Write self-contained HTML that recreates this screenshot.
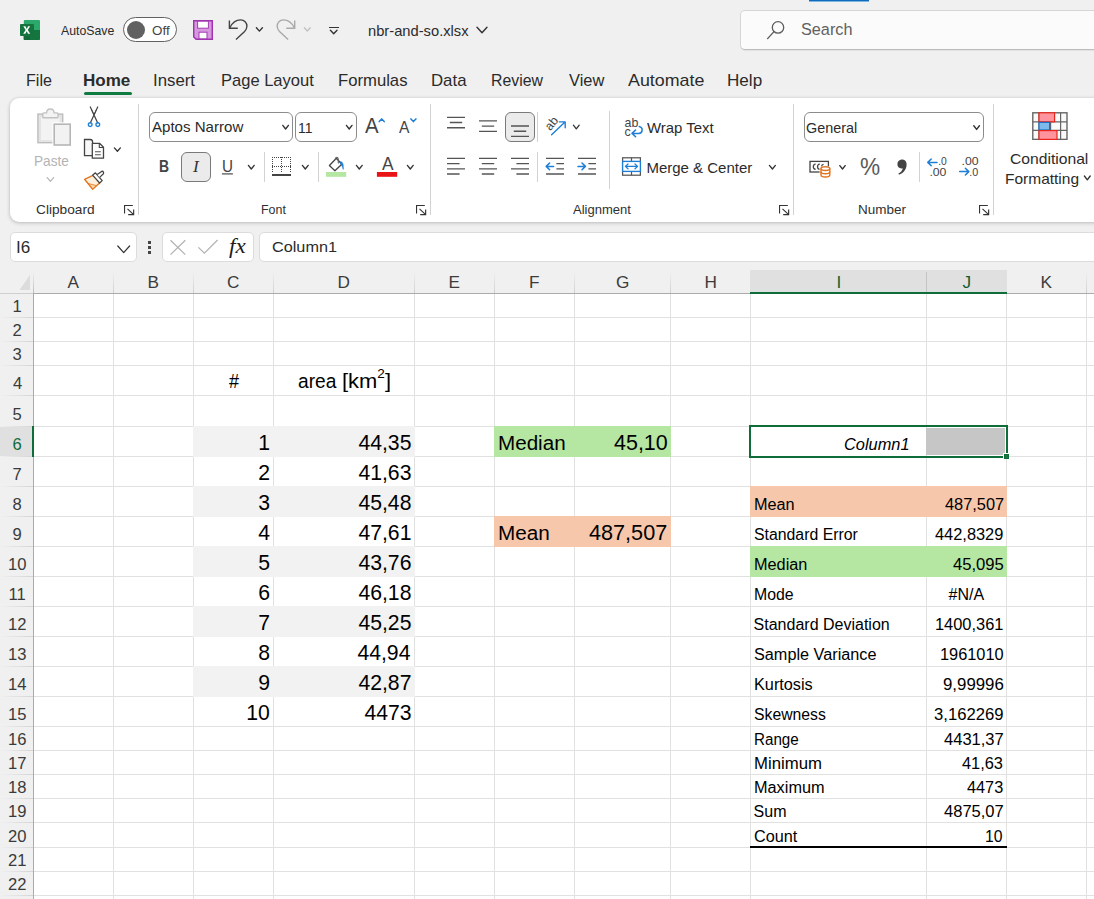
<!DOCTYPE html>
<html lang="en"><head><meta charset="utf-8"><title>nbr-and-so.xlsx - Excel</title>
<style>
html,body{margin:0;padding:0}
body{width:1094px;height:899px;overflow:hidden;position:relative;background:#f0f0f0;font-family:"Liberation Sans",sans-serif}
.a{position:absolute;box-sizing:border-box;display:block}
.t{position:absolute;white-space:pre;line-height:1;transform-origin:0 0}
</style></head>
<body>
<div class="a" style="left:34px;top:294px;width:1060px;height:605px;background:#ffffff;"></div>
<div class="a" style="left:34px;top:317px;width:1060px;height:1px;background:#e1e1e1;"></div>
<div class="a" style="left:34px;top:341px;width:1060px;height:1px;background:#e1e1e1;"></div>
<div class="a" style="left:34px;top:365px;width:1060px;height:1px;background:#e1e1e1;"></div>
<div class="a" style="left:34px;top:395px;width:1060px;height:1px;background:#e1e1e1;"></div>
<div class="a" style="left:34px;top:426px;width:1060px;height:1px;background:#e1e1e1;"></div>
<div class="a" style="left:34px;top:456px;width:1060px;height:1px;background:#e1e1e1;"></div>
<div class="a" style="left:34px;top:486px;width:1060px;height:1px;background:#e1e1e1;"></div>
<div class="a" style="left:34px;top:516px;width:1060px;height:1px;background:#e1e1e1;"></div>
<div class="a" style="left:34px;top:546px;width:1060px;height:1px;background:#e1e1e1;"></div>
<div class="a" style="left:34px;top:576px;width:1060px;height:1px;background:#e1e1e1;"></div>
<div class="a" style="left:34px;top:606px;width:1060px;height:1px;background:#e1e1e1;"></div>
<div class="a" style="left:34px;top:636px;width:1060px;height:1px;background:#e1e1e1;"></div>
<div class="a" style="left:34px;top:666px;width:1060px;height:1px;background:#e1e1e1;"></div>
<div class="a" style="left:34px;top:696px;width:1060px;height:1px;background:#e1e1e1;"></div>
<div class="a" style="left:34px;top:726px;width:1060px;height:1px;background:#e1e1e1;"></div>
<div class="a" style="left:34px;top:750px;width:1060px;height:1px;background:#e1e1e1;"></div>
<div class="a" style="left:34px;top:774px;width:1060px;height:1px;background:#e1e1e1;"></div>
<div class="a" style="left:34px;top:798px;width:1060px;height:1px;background:#e1e1e1;"></div>
<div class="a" style="left:34px;top:822px;width:1060px;height:1px;background:#e1e1e1;"></div>
<div class="a" style="left:34px;top:847px;width:1060px;height:1px;background:#e1e1e1;"></div>
<div class="a" style="left:34px;top:871px;width:1060px;height:1px;background:#e1e1e1;"></div>
<div class="a" style="left:34px;top:895px;width:1060px;height:1px;background:#e1e1e1;"></div>
<div class="a" style="left:113px;top:294px;width:1px;height:605px;background:#e1e1e1;"></div>
<div class="a" style="left:193px;top:294px;width:1px;height:605px;background:#e1e1e1;"></div>
<div class="a" style="left:273px;top:294px;width:1px;height:605px;background:#e1e1e1;"></div>
<div class="a" style="left:414px;top:294px;width:1px;height:605px;background:#e1e1e1;"></div>
<div class="a" style="left:494px;top:294px;width:1px;height:605px;background:#e1e1e1;"></div>
<div class="a" style="left:574px;top:294px;width:1px;height:605px;background:#e1e1e1;"></div>
<div class="a" style="left:670px;top:294px;width:1px;height:605px;background:#e1e1e1;"></div>
<div class="a" style="left:750px;top:294px;width:1px;height:605px;background:#e1e1e1;"></div>
<div class="a" style="left:926px;top:294px;width:1px;height:605px;background:#e1e1e1;"></div>
<div class="a" style="left:1006px;top:294px;width:1px;height:605px;background:#e1e1e1;"></div>
<div class="a" style="left:1086px;top:294px;width:1px;height:605px;background:#e1e1e1;"></div>
<div class="a" style="left:193px;top:426px;width:222px;height:31px;background:#f2f2f2;"></div>
<div class="a" style="left:193px;top:486px;width:222px;height:31px;background:#f2f2f2;"></div>
<div class="a" style="left:193px;top:546px;width:222px;height:31px;background:#f2f2f2;"></div>
<div class="a" style="left:193px;top:606px;width:222px;height:31px;background:#f2f2f2;"></div>
<div class="a" style="left:193px;top:666px;width:222px;height:31px;background:#f2f2f2;"></div>
<div class="a" style="left:494px;top:426px;width:177px;height:31px;background:#b5e6a2;"></div>
<div class="a" style="left:494px;top:516px;width:177px;height:31px;background:#f7c7ac;"></div>
<div class="a" style="left:750px;top:486px;width:257px;height:31px;background:#f7c7ac;"></div>
<div class="a" style="left:750px;top:546px;width:257px;height:31px;background:#b5e6a2;"></div>
<div class="a" style="left:0px;top:270px;width:1094px;height:23px;background:#f0f0f0;"></div>
<div class="a" style="left:0px;top:294px;width:33px;height:605px;background:#f0f0f0;"></div>
<div class="a" style="left:0px;top:293px;width:33px;height:1px;background:#cfcfcf;"></div>
<div class="a" style="left:33px;top:293px;width:1061px;height:1px;background:#ababab;"></div>
<div class="a" style="left:33px;top:294px;width:1px;height:605px;background:#ababab;"></div>
<div class="a" style="left:33px;top:272px;width:1px;height:21px;background:linear-gradient(#f0f0f0,#bdbdbd);"></div>
<div class="a" style="left:113px;top:272px;width:1px;height:21px;background:linear-gradient(#f0f0f0,#cfcfcf);"></div>
<div class="a" style="left:193px;top:272px;width:1px;height:21px;background:linear-gradient(#f0f0f0,#cfcfcf);"></div>
<div class="a" style="left:273px;top:272px;width:1px;height:21px;background:linear-gradient(#f0f0f0,#cfcfcf);"></div>
<div class="a" style="left:414px;top:272px;width:1px;height:21px;background:linear-gradient(#f0f0f0,#cfcfcf);"></div>
<div class="a" style="left:494px;top:272px;width:1px;height:21px;background:linear-gradient(#f0f0f0,#cfcfcf);"></div>
<div class="a" style="left:574px;top:272px;width:1px;height:21px;background:linear-gradient(#f0f0f0,#cfcfcf);"></div>
<div class="a" style="left:670px;top:272px;width:1px;height:21px;background:linear-gradient(#f0f0f0,#cfcfcf);"></div>
<div class="a" style="left:750px;top:272px;width:1px;height:21px;background:linear-gradient(#f0f0f0,#cfcfcf);"></div>
<div class="a" style="left:926px;top:272px;width:1px;height:21px;background:linear-gradient(#f0f0f0,#cfcfcf);"></div>
<div class="a" style="left:1006px;top:272px;width:1px;height:21px;background:linear-gradient(#f0f0f0,#cfcfcf);"></div>
<div class="a" style="left:1086px;top:272px;width:1px;height:21px;background:linear-gradient(#f0f0f0,#cfcfcf);"></div>
<div class="a" style="left:0px;top:317px;width:33px;height:1px;background:linear-gradient(90deg,#f0f0f0,#d4d4d4);"></div>
<div class="a" style="left:0px;top:341px;width:33px;height:1px;background:linear-gradient(90deg,#f0f0f0,#d4d4d4);"></div>
<div class="a" style="left:0px;top:365px;width:33px;height:1px;background:linear-gradient(90deg,#f0f0f0,#d4d4d4);"></div>
<div class="a" style="left:0px;top:395px;width:33px;height:1px;background:linear-gradient(90deg,#f0f0f0,#d4d4d4);"></div>
<div class="a" style="left:0px;top:426px;width:33px;height:1px;background:linear-gradient(90deg,#f0f0f0,#d4d4d4);"></div>
<div class="a" style="left:0px;top:456px;width:33px;height:1px;background:linear-gradient(90deg,#f0f0f0,#d4d4d4);"></div>
<div class="a" style="left:0px;top:486px;width:33px;height:1px;background:linear-gradient(90deg,#f0f0f0,#d4d4d4);"></div>
<div class="a" style="left:0px;top:516px;width:33px;height:1px;background:linear-gradient(90deg,#f0f0f0,#d4d4d4);"></div>
<div class="a" style="left:0px;top:546px;width:33px;height:1px;background:linear-gradient(90deg,#f0f0f0,#d4d4d4);"></div>
<div class="a" style="left:0px;top:576px;width:33px;height:1px;background:linear-gradient(90deg,#f0f0f0,#d4d4d4);"></div>
<div class="a" style="left:0px;top:606px;width:33px;height:1px;background:linear-gradient(90deg,#f0f0f0,#d4d4d4);"></div>
<div class="a" style="left:0px;top:636px;width:33px;height:1px;background:linear-gradient(90deg,#f0f0f0,#d4d4d4);"></div>
<div class="a" style="left:0px;top:666px;width:33px;height:1px;background:linear-gradient(90deg,#f0f0f0,#d4d4d4);"></div>
<div class="a" style="left:0px;top:696px;width:33px;height:1px;background:linear-gradient(90deg,#f0f0f0,#d4d4d4);"></div>
<div class="a" style="left:0px;top:726px;width:33px;height:1px;background:linear-gradient(90deg,#f0f0f0,#d4d4d4);"></div>
<div class="a" style="left:0px;top:750px;width:33px;height:1px;background:linear-gradient(90deg,#f0f0f0,#d4d4d4);"></div>
<div class="a" style="left:0px;top:774px;width:33px;height:1px;background:linear-gradient(90deg,#f0f0f0,#d4d4d4);"></div>
<div class="a" style="left:0px;top:798px;width:33px;height:1px;background:linear-gradient(90deg,#f0f0f0,#d4d4d4);"></div>
<div class="a" style="left:0px;top:822px;width:33px;height:1px;background:linear-gradient(90deg,#f0f0f0,#d4d4d4);"></div>
<div class="a" style="left:0px;top:847px;width:33px;height:1px;background:linear-gradient(90deg,#f0f0f0,#d4d4d4);"></div>
<div class="a" style="left:0px;top:871px;width:33px;height:1px;background:linear-gradient(90deg,#f0f0f0,#d4d4d4);"></div>
<div class="a" style="left:0px;top:895px;width:33px;height:1px;background:linear-gradient(90deg,#f0f0f0,#d4d4d4);"></div>
<svg class="a" style="left:18px;top:272px" width="14" height="20" viewBox="0 0 14 20"><path d="M12 3 L12 18 L1.5 18 Z" fill="#dcdcdc"/></svg>
<div class="a" style="left:750px;top:270px;width:257px;height:22px;background:#e0e0e0;"></div>
<div class="a" style="left:926px;top:272px;width:1px;height:20px;background:#c4c4c4;"></div>
<div class="a" style="left:750px;top:292px;width:257px;height:2px;background:#0e6d38;"></div>
<div class="a" style="left:0px;top:427px;width:32px;height:29px;background:#e0e0e0;"></div>
<div class="a" style="left:32px;top:426px;width:2px;height:31px;background:#0e6d38;"></div>
<span class="t" style='left:67.50px;top:274px;font-size:17.2px;color:#3b3b3b;'>A</span>
<span class="t" style='left:147.50px;top:274px;font-size:17.2px;color:#3b3b3b;'>B</span>
<span class="t" style='left:227.00px;top:274px;font-size:17.2px;color:#3b3b3b;'>C</span>
<span class="t" style='left:337.50px;top:274px;font-size:17.2px;color:#3b3b3b;'>D</span>
<span class="t" style='left:448.50px;top:274px;font-size:17.2px;color:#3b3b3b;'>E</span>
<span class="t" style='left:529.00px;top:274px;font-size:17.2px;color:#3b3b3b;'>F</span>
<span class="t" style='left:616.00px;top:274px;font-size:17.2px;color:#3b3b3b;'>G</span>
<span class="t" style='left:704.50px;top:274px;font-size:17.2px;color:#3b3b3b;'>H</span>
<span class="t" style='left:836.50px;top:274px;font-size:17.2px;color:#0f5c32;'>I</span>
<span class="t" style='left:962.50px;top:274px;font-size:17.2px;color:#0f5c32;'>J</span>
<span class="t" style='left:1040.50px;top:274px;font-size:17.2px;color:#3b3b3b;'>K</span>
<span class="t" style='left:12.60px;top:299px;font-size:16.6px;color:#3b3b3b;'>1</span>
<span class="t" style='left:12.60px;top:323px;font-size:16.6px;color:#3b3b3b;'>2</span>
<span class="t" style='left:12.60px;top:347px;font-size:16.6px;color:#3b3b3b;'>3</span>
<span class="t" style='left:13.10px;top:376px;font-size:16.6px;color:#3b3b3b;'>4</span>
<span class="t" style='left:12.60px;top:407px;font-size:16.6px;color:#3b3b3b;'>5</span>
<span class="t" style='left:12.60px;top:437px;font-size:16.6px;color:#0f6b38;'>6</span>
<span class="t" style='left:12.60px;top:467px;font-size:16.6px;color:#3b3b3b;'>7</span>
<span class="t" style='left:12.60px;top:497px;font-size:16.6px;color:#3b3b3b;'>8</span>
<span class="t" style='left:12.60px;top:527px;font-size:16.6px;color:#3b3b3b;'>9</span>
<span class="t" style='left:8.10px;top:557px;font-size:16.6px;color:#3b3b3b;'>10</span>
<span class="t" style='left:8.60px;top:587px;font-size:16.6px;color:#3b3b3b;'>11</span>
<span class="t" style='left:8.10px;top:617px;font-size:16.6px;color:#3b3b3b;'>12</span>
<span class="t" style='left:8.10px;top:647px;font-size:16.6px;color:#3b3b3b;'>13</span>
<span class="t" style='left:8.10px;top:677px;font-size:16.6px;color:#3b3b3b;'>14</span>
<span class="t" style='left:8.10px;top:707px;font-size:16.6px;color:#3b3b3b;'>15</span>
<span class="t" style='left:8.10px;top:732px;font-size:16.6px;color:#3b3b3b;'>16</span>
<span class="t" style='left:8.10px;top:756px;font-size:16.6px;color:#3b3b3b;'>17</span>
<span class="t" style='left:8.10px;top:780px;font-size:16.6px;color:#3b3b3b;'>18</span>
<span class="t" style='left:8.10px;top:804px;font-size:16.6px;color:#3b3b3b;'>19</span>
<span class="t" style='left:8.10px;top:829px;font-size:16.6px;color:#3b3b3b;'>20</span>
<span class="t" style='left:8.10px;top:853px;font-size:16.6px;color:#3b3b3b;'>21</span>
<span class="t" style='left:8.10px;top:877px;font-size:16.6px;color:#3b3b3b;'>22</span>
<span class="t" style='left:228.90px;top:371px;font-size:20px;color:#000000;transform:scaleX(0.9000);'>#</span>
<span class="t" style='left:297.76px;top:371px;font-size:20.5px;color:#000000;transform:scaleX(0.9350);'>area</span>
<span class="t" style='left:342.23px;top:371px;font-size:20.5px;color:#000000;transform:scaleX(1.0698);'>[km<span style="font-size:62%;position:relative;top:-0.78em">2</span>]</span>
<span class="t" style='left:258.30px;top:432px;font-size:21.2px;color:#000000;'>1</span>
<span class="t" style='left:358.40px;top:432px;font-size:21.2px;color:#000000;'>44,35</span>
<span class="t" style='left:258.30px;top:462px;font-size:21.2px;color:#000000;'>2</span>
<span class="t" style='left:358.40px;top:462px;font-size:21.2px;color:#000000;'>41,63</span>
<span class="t" style='left:258.30px;top:492px;font-size:21.2px;color:#000000;'>3</span>
<span class="t" style='left:358.40px;top:492px;font-size:21.2px;color:#000000;'>45,48</span>
<span class="t" style='left:258.30px;top:522px;font-size:21.2px;color:#000000;'>4</span>
<span class="t" style='left:358.40px;top:522px;font-size:21.2px;color:#000000;'>47,61</span>
<span class="t" style='left:258.30px;top:552px;font-size:21.2px;color:#000000;'>5</span>
<span class="t" style='left:358.40px;top:552px;font-size:21.2px;color:#000000;'>43,76</span>
<span class="t" style='left:258.30px;top:582px;font-size:21.2px;color:#000000;'>6</span>
<span class="t" style='left:358.40px;top:582px;font-size:21.2px;color:#000000;'>46,18</span>
<span class="t" style='left:258.30px;top:612px;font-size:21.2px;color:#000000;'>7</span>
<span class="t" style='left:358.40px;top:612px;font-size:21.2px;color:#000000;'>45,25</span>
<span class="t" style='left:258.30px;top:642px;font-size:21.2px;color:#000000;'>8</span>
<span class="t" style='left:357.40px;top:642px;font-size:21.2px;color:#000000;'>44,94</span>
<span class="t" style='left:258.30px;top:672px;font-size:21.2px;color:#000000;'>9</span>
<span class="t" style='left:358.40px;top:672px;font-size:21.2px;color:#000000;'>42,87</span>
<span class="t" style='left:246.30px;top:702px;font-size:21.2px;color:#000000;'>10</span>
<span class="t" style='left:364.40px;top:702px;font-size:21.2px;color:#000000;'>4473</span>
<span class="t" style='left:498.07px;top:433px;font-size:20px;color:#000000;transform:scaleX(1.0312);'>Median</span>
<span class="t" style='left:613.50px;top:432px;font-size:21.2px;color:#000000;transform:scaleX(1.0135);'>45,10</span>
<span class="t" style='left:497.56px;top:523px;font-size:20px;color:#000000;transform:scaleX(1.0354);'>Mean</span>
<span class="t" style='left:589.40px;top:522px;font-size:21.2px;color:#000000;transform:scaleX(1.0211);'>487,507</span>
<span class="t" style='left:844.39px;top:436px;font-size:16.2px;color:#000000;font-style:italic;transform:scaleX(1.0111);'>Column1</span>
<span class="t" style='left:753.58px;top:497px;font-size:16px;color:#000000;transform:scaleX(1.0158);'>Mean</span>
<span class="t" style='left:944.60px;top:497px;font-size:16px;color:#000000;transform:scaleX(1.0228);'>487,507</span>
<span class="t" style='left:753.61px;top:527px;font-size:16px;color:#000000;transform:scaleX(0.9894);'>Standard Error</span>
<span class="t" style='left:935.30px;top:527px;font-size:16px;color:#000000;transform:scaleX(1.0242);'>442,8329</span>
<span class="t" style='left:753.58px;top:557px;font-size:16px;color:#000000;transform:scaleX(1.0176);'>Median</span>
<span class="t" style='left:953.00px;top:557px;font-size:16px;color:#000000;transform:scaleX(1.0396);'>45,095</span>
<span class="t" style='left:753.61px;top:587px;font-size:16px;color:#000000;transform:scaleX(0.9897);'>Mode</span>
<span class="t" style='left:948.60px;top:587px;font-size:16px;color:#000000;'>#N/A</span>
<span class="t" style='left:753.60px;top:617px;font-size:16px;color:#000000;'>Standard Deviation</span>
<span class="t" style='left:935.28px;top:617px;font-size:16px;color:#000000;transform:scaleX(1.0246);'>1400,361</span>
<span class="t" style='left:753.58px;top:647px;font-size:16px;color:#000000;transform:scaleX(1.0151);'>Sample Variance</span>
<span class="t" style='left:939.58px;top:647px;font-size:16px;color:#000000;transform:scaleX(1.0213);'>1961010</span>
<span class="t" style='left:753.58px;top:677px;font-size:16px;color:#000000;transform:scaleX(1.0161);'>Kurtosis</span>
<span class="t" style='left:942.95px;top:677px;font-size:16px;color:#000000;transform:scaleX(1.0518);'>9,99996</span>
<span class="t" style='left:753.62px;top:707px;font-size:16px;color:#000000;transform:scaleX(0.9847);'>Skewness</span>
<span class="t" style='left:934.26px;top:707px;font-size:16px;color:#000000;transform:scaleX(1.0400);'>3,162269</span>
<span class="t" style='left:753.65px;top:732px;font-size:16px;color:#000000;transform:scaleX(0.9478);'>Range</span>
<span class="t" style='left:944.00px;top:732px;font-size:16px;color:#000000;transform:scaleX(1.0333);'>4431,37</span>
<span class="t" style='left:753.55px;top:756px;font-size:16px;color:#000000;transform:scaleX(1.0460);'>Minimum</span>
<span class="t" style='left:962.00px;top:756px;font-size:16px;color:#000000;transform:scaleX(1.0225);'>41,63</span>
<span class="t" style='left:753.58px;top:780px;font-size:16px;color:#000000;transform:scaleX(1.0176);'>Maximum</span>
<span class="t" style='left:967.30px;top:780px;font-size:16px;color:#000000;transform:scaleX(1.0171);'>4473</span>
<span class="t" style='left:753.60px;top:804px;font-size:16px;color:#000000;'>Sum</span>
<span class="t" style='left:944.00px;top:804px;font-size:16px;color:#000000;transform:scaleX(1.0333);'>4875,07</span>
<span class="t" style='left:753.59px;top:829px;font-size:16px;color:#000000;transform:scaleX(1.0143);'>Count</span>
<span class="t" style='left:985.22px;top:829px;font-size:16px;color:#000000;transform:scaleX(0.9824);'>10</span>
<div class="a" style="left:750px;top:846px;width:257px;height:2px;background:#000000;"></div>
<div class="a" style="left:926px;top:428px;width:79px;height:27px;background:#c6c6c6;"></div>
<div class="a" style="left:749px;top:425px;width:259px;height:33px;border:2px solid #0e6d38;"></div>
<div class="a" style="left:1003px;top:453px;width:6px;height:6px;background:#ffffff;"></div>
<div class="a" style="left:1004px;top:454px;width:5px;height:5px;background:#1a7541;border:1px solid #0e6d38;"></div>
<div class="a" style="left:809px;top:0px;width:60px;height:1px;background:#0f6cbd;"></div>
<div class="a" style="left:809px;top:1px;width:60px;height:1px;background:#7db4e0;"></div>
<svg class="a" style="left:20px;top:20px" width="20" height="20" viewBox="0 0 20 20">
<rect x="3.8" y="0" width="16.2" height="20" rx="1" fill="#2ba96c"/>
<path d="M3.8 10 H20 V19 Q20 20 19 20 H4.8 Q3.8 20 3.8 19 Z" fill="#15753f"/>
<rect x="3.8" y="10" width="6" height="10" fill="#136a38"/>
<rect x="0" y="4" width="14" height="12" rx="0.9" fill="#15733d"/>
<path d="M3.3 6.3 L5.4 6.3 L6.7 8.9 L8.1 6.3 L10.1 6.3 L7.75 10 L10.2 13.8 L8.1 13.8 L6.7 11.2 L5.3 13.8 L3.2 13.8 L5.65 10 Z" fill="#fff"/>
</svg>
<span class="t" style='left:61.40px;top:24px;font-size:13px;color:#2b2b2b;transform:scaleX(0.9464);'>AutoSave</span>
<div class="a" style="left:123px;top:17px;width:54px;height:25px;background:#ffffff;border:1px solid #616161;border-radius:13px;"></div>
<div class="a" style="left:127px;top:21px;width:18px;height:18px;background:#616161;border-radius:50%;"></div>
<span class="t" style='left:151.50px;top:24px;font-size:13px;color:#444;transform:scaleX(1.0294);'>Off</span>
<svg class="a" style="left:193px;top:20px" width="20" height="20" viewBox="0 0 20 20">
<path d="M0.7 0.7 H19.3 V19.3 H3.2 L0.7 16.8 Z" fill="#d898e0" stroke="#a033ae" stroke-width="1.5"/>
<rect x="4.6" y="1.2" width="10.8" height="7" fill="#ffffff" stroke="#a33bb2" stroke-width="1"/>
<rect x="6" y="12.2" width="8" height="6.6" fill="#ffffff" stroke="#a33bb2" stroke-width="1"/>
</svg>
<svg class="a" style="left:226px;top:17px" width="24" height="25" viewBox="226 17 24 25"><path d="M229.40 20.4 L229.40 28.2 L237.80 28.2" fill="none" stroke="#444" stroke-width="1.4"/><path d="M229.80 27.8 C232.20 22.8 236.20 19.9 240.60 19.9 C244.40 19.9 246.90 22.8 246.90 26.3 C246.90 28.4 246.00 30.0 244.60 31.4 L236.00 39.6" fill="none" stroke="#444" stroke-width="1.4"/></svg>
<svg class="a" style="left:255px;top:27px" width="10" height="7" viewBox="0 0 10 7"><path d="M1.40 0.70 L4.40 4.10 L7.40 0.70" fill="none" stroke="#333" stroke-width="1.35" stroke-linecap="round" stroke-linejoin="round"/></svg>
<svg class="a" style="left:274px;top:17px" width="24" height="25" viewBox="274 17 24 25"><path d="M294.70 20.4 L294.70 28.2 L286.30 28.2" fill="none" stroke="#a9a9a9" stroke-width="1.4"/><path d="M294.30 27.8 C291.90 22.8 287.90 19.9 283.50 19.9 C279.70 19.9 277.20 22.8 277.20 26.3 C277.20 28.4 278.10 30.0 279.50 31.4 L288.10 39.6" fill="none" stroke="#a9a9a9" stroke-width="1.4"/></svg>
<svg class="a" style="left:303px;top:27px" width="10" height="7" viewBox="0 0 10 7"><path d="M1.40 0.70 L4.30 4.00 L7.20 0.70" fill="none" stroke="#c2c2c2" stroke-width="1.35" stroke-linecap="round" stroke-linejoin="round"/></svg>
<div class="a" style="left:329px;top:26.5px;width:9.5px;height:1.5px;background:#333;"></div>
<svg class="a" style="left:329px;top:29px" width="11" height="8" viewBox="0 0 11 8"><path d="M1.40 1.20 L4.70 4.80 L8.00 1.20" fill="none" stroke="#333" stroke-width="1.35" stroke-linecap="round" stroke-linejoin="round"/></svg>
<span class="t" style='left:368.49px;top:24px;font-size:14.6px;color:#2b2b2b;transform:scaleX(1.0081);'>nbr-and-so.xlsx</span>
<svg class="a" style="left:476px;top:26px" width="14" height="10" viewBox="0 0 14 10"><path d="M1.00 1.20 L6.00 6.80 L11.00 1.20" fill="none" stroke="#333" stroke-width="1.4" stroke-linecap="round" stroke-linejoin="round"/></svg>
<div class="a" style="left:740px;top:10px;width:360px;height:40px;background:#fbfbfb;border:1px solid #d6d6d6;border-bottom-color:#bcbcbc;border-radius:5px;box-shadow:0 1px 1px rgba(0,0,0,.06);"></div>
<svg class="a" style="left:765px;top:19px" width="22" height="22" viewBox="0 0 22 22">
<circle cx="13" cy="8.4" r="5.7" fill="none" stroke="#5c5c5c" stroke-width="1.3"/>
<path d="M9 12.6 L2.6 19.6" stroke="#5c5c5c" stroke-width="1.4" stroke-linecap="round"/>
</svg>
<span class="t" style='left:801.43px;top:22px;font-size:16.7px;color:#616161;transform:scaleX(0.9725);'>Search</span>
<span class="t" style='left:26.43px;top:73px;font-size:16.6px;color:#2b2b2b;transform:scaleX(0.9680);'>File</span>
<span class="t" style='left:153.49px;top:73px;font-size:16.6px;color:#2b2b2b;transform:scaleX(1.0122);'>Insert</span>
<span class="t" style='left:220.50px;top:73px;font-size:16.6px;color:#2b2b2b;transform:scaleX(0.9957);'>Page Layout</span>
<span class="t" style='left:337.70px;top:73px;font-size:16.6px;color:#2b2b2b;transform:scaleX(1.0044);'>Formulas</span>
<span class="t" style='left:430.59px;top:73px;font-size:16.6px;color:#2b2b2b;transform:scaleX(1.0118);'>Data</span>
<span class="t" style='left:490.55px;top:73px;font-size:16.6px;color:#2b2b2b;transform:scaleX(0.9537);'>Review</span>
<span class="t" style='left:568.60px;top:73px;font-size:16.6px;color:#2b2b2b;transform:scaleX(0.9889);'>View</span>
<span class="t" style='left:628.30px;top:73px;font-size:16.6px;color:#2b2b2b;transform:scaleX(1.0743);'>Automate</span>
<span class="t" style='left:726.57px;top:73px;font-size:16.6px;color:#2b2b2b;transform:scaleX(1.0303);'>Help</span>
<span class="t" style='left:83.47px;top:73px;font-size:16.6px;color:#2b2b2b;font-weight:700;transform:scaleX(1.0267);'>Home</span>
<div class="a" style="left:84px;top:92px;width:48px;height:3px;background:#107c41;border-radius:1.5px;"></div>
<div class="a" style="left:10px;top:98px;width:1100px;height:124px;background:#ffffff;border-radius:9px 0 0 9px;box-shadow:0 1px 4px rgba(0,0,0,.20),0 0 2px rgba(0,0,0,.10);"></div>
<div class="a" style="left:10px;top:232px;width:127px;height:30px;background:#ffffff;border:1px solid #dcdcdc;border-radius:5px;"></div>
<span class="t" style='left:16.33px;top:240px;font-size:16px;color:#2b2b2b;transform:scaleX(1.0667);'>I6</span>
<svg class="a" style="left:117px;top:245px" width="16" height="11" viewBox="0 0 16 11"><path d="M0.80 1.00 L6.70 7.60 L12.60 1.00" fill="none" stroke="#333" stroke-width="1.2" stroke-linecap="round" stroke-linejoin="round"/></svg>
<div class="a" style="left:147.5px;top:241px;width:3px;height:3px;background:#444;"></div>
<div class="a" style="left:147.5px;top:246px;width:3px;height:3px;background:#444;"></div>
<div class="a" style="left:147.5px;top:251px;width:3px;height:3px;background:#444;"></div>
<div class="a" style="left:162px;top:232px;width:92px;height:30px;background:#ffffff;border:1px solid #dcdcdc;border-radius:5px;"></div>
<svg class="a" style="left:169px;top:239px" width="18" height="17" viewBox="0 0 18 17"><path d="M1.5 1.2 L16.3 15.6 M16.3 1.2 L1.5 15.6" stroke="#b4b4b4" stroke-width="1.3" fill="none"/></svg>
<svg class="a" style="left:197px;top:238px" width="22" height="17" viewBox="0 0 22 17"><path d="M1.4 9.4 L7.4 15.2 L20.6 2" stroke="#b4b4b4" stroke-width="1.3" fill="none"/></svg>
<span class="t" style='left:229.20px;top:236px;font-size:21.5px;color:#1c1c1c;font-style:italic;font-family:"Liberation Serif",serif;transform:scaleX(1.0750);'>fx</span>
<div class="a" style="left:259px;top:232px;width:900px;height:30px;background:#ffffff;border:1px solid #dcdcdc;border-radius:5px;"></div>
<span class="t" style='left:271.75px;top:239px;font-size:15.4px;color:#2b2b2b;transform:scaleX(1.0550);'>Column1</span>
<div class="a" style="left:138px;top:104px;width:1px;height:111px;background:#d2d2d2;"></div>
<div class="a" style="left:430px;top:104px;width:1px;height:111px;background:#d2d2d2;"></div>
<div class="a" style="left:793px;top:104px;width:1px;height:111px;background:#d2d2d2;"></div>
<div class="a" style="left:993px;top:104px;width:1px;height:111px;background:#d2d2d2;"></div>
<div class="a" style="left:609px;top:111px;width:1px;height:78px;background:#d2d2d2;"></div>
<span class="t" style='left:36.36px;top:203px;font-size:13.2px;color:#303030;transform:scaleX(1.0382);'>Clipboard</span>
<span class="t" style='left:261.36px;top:203px;font-size:13.2px;color:#303030;transform:scaleX(0.9423);'>Font</span>
<span class="t" style='left:573.00px;top:203px;font-size:13.2px;color:#303030;transform:scaleX(0.9864);'>Alignment</span>
<span class="t" style='left:858.38px;top:203px;font-size:13.2px;color:#303030;transform:scaleX(1.0239);'>Number</span>
<svg class="a" style="left:124px;top:205px" width="11" height="11" viewBox="0 0 11 11"><path d="M0.55 8.5 V0.55 H8.8" fill="none" stroke="#333" stroke-width="1.1"/><path d="M3.5 3.9 L9.4 9.4 M9.65 4.4 V9.65 H4.2" fill="none" stroke="#333" stroke-width="1.15"/></svg>
<svg class="a" style="left:416px;top:205px" width="11" height="11" viewBox="0 0 11 11"><path d="M0.55 8.5 V0.55 H8.8" fill="none" stroke="#333" stroke-width="1.1"/><path d="M3.5 3.9 L9.4 9.4 M9.65 4.4 V9.65 H4.2" fill="none" stroke="#333" stroke-width="1.15"/></svg>
<svg class="a" style="left:779px;top:205px" width="11" height="11" viewBox="0 0 11 11"><path d="M0.55 8.5 V0.55 H8.8" fill="none" stroke="#333" stroke-width="1.1"/><path d="M3.5 3.9 L9.4 9.4 M9.65 4.4 V9.65 H4.2" fill="none" stroke="#333" stroke-width="1.15"/></svg>
<svg class="a" style="left:979px;top:205px" width="11" height="11" viewBox="0 0 11 11"><path d="M0.55 8.5 V0.55 H8.8" fill="none" stroke="#333" stroke-width="1.1"/><path d="M3.5 3.9 L9.4 9.4 M9.65 4.4 V9.65 H4.2" fill="none" stroke="#333" stroke-width="1.15"/></svg>
<svg class="a" style="left:35px;top:106px" width="38" height="42" viewBox="35 106 38 42">
<rect x="37.9" y="114.1" width="24.8" height="28.6" fill="#e4e4e4" stroke="#bdbdbd" stroke-width="1.4"/>
<rect x="41" y="117.4" width="18.6" height="22.6" fill="#f3f3f3"/>
<path d="M43.6 112.9 H46.6 C46.6 107.6 54.1 107.6 54.1 112.9 H57.2 Q58 112.9 58 113.8 V116.9 Q58 117.8 57.2 117.8 H43.6 Q42.8 117.8 42.8 116.9 V113.8 Q42.8 112.9 43.6 112.9 Z" fill="#f3f3f3" stroke="#c2c2c2" stroke-width="1.4"/>
<rect x="52.4" y="122.4" width="19.4" height="24.2" fill="#ffffff"/>
<rect x="54.2" y="124.2" width="16" height="20.8" fill="#f2f2f2" stroke="#b6b6b6" stroke-width="1.6"/>
</svg>
<span class="t" style='left:33.68px;top:154px;font-size:14.8px;color:#b4b4b4;transform:scaleX(0.9222);'>Paste</span>
<svg class="a" style="left:46px;top:177px" width="10" height="8" viewBox="0 0 10 8"><path d="M1.20 0.60 L4.40 4.40 L7.60 0.60" fill="none" stroke="#b9b9b9" stroke-width="1.3" stroke-linecap="round" stroke-linejoin="round"/></svg>
<svg class="a" style="left:86px;top:104px" width="17" height="25" viewBox="86 104 17 25">
<path d="M90.3 107 L97.6 122.7 M97.7 107 L90.4 122.7" stroke="#444" stroke-width="1.25" fill="none" stroke-linecap="round"/>
<path d="M91.6 109.6 L94 115 L96.4 109.6" stroke="#444" stroke-width="0.7" fill="none"/>
<circle cx="90.2" cy="124.6" r="1.85" fill="none" stroke="#1e7fd6" stroke-width="1.35"/>
<circle cx="97.8" cy="124.6" r="1.85" fill="none" stroke="#1e7fd6" stroke-width="1.35"/>
</svg>
<svg class="a" style="left:82px;top:137px" width="24" height="24" viewBox="82 137 24 24">
<path d="M92 155.7 H84.5 V139.5 H90.2 Q92.5 139.6 92.6 142 V143.2" fill="#f8f8f8" stroke="#444" stroke-width="1.3"/>
<path d="M92.3 143.3 H99.5 L103.5 147.3 V158.2 H92.3 Z" fill="#fdfdfd" stroke="#444" stroke-width="1.3" stroke-linejoin="round"/>
<path d="M99.3 143.6 V147.5 H103.3" fill="none" stroke="#444" stroke-width="1.1"/>
<path d="M95 151.8 H100.8 M95 154.8 H100.8" stroke="#555" stroke-width="1.1"/>
</svg>
<svg class="a" style="left:113px;top:147px" width="10" height="7" viewBox="0 0 10 7"><path d="M1.40 0.90 L4.40 4.30 L7.40 0.90" fill="none" stroke="#333" stroke-width="1.3" stroke-linecap="round" stroke-linejoin="round"/></svg>
<svg class="a" style="left:82px;top:169px" width="24" height="23" viewBox="82 169 24 23">
<path d="M92.9 175.3 L84.6 179.3 L92.7 189.2 L100.1 182.6 Z" fill="#fdf0dc" stroke="#e1741f" stroke-width="1.4" stroke-linejoin="round"/>
<path d="M88.6 183.6 L96.4 185.6 L92.7 188.8 Z" fill="#fbd9a6" stroke="#e1741f" stroke-width="0.8" stroke-linejoin="round"/>
<path d="M92.6 175.2 L95.4 172.8 L102.2 180.6 L99.6 183 Z" fill="#fff" stroke="#444" stroke-width="1.25" stroke-linejoin="round"/>
<path d="M97.2 174.6 L101.6 171.4 Q102.9 170.9 103.5 172.2 Q103.9 173.2 103.2 174 L99.6 177.4" fill="#fff" stroke="#444" stroke-width="1.25" stroke-linejoin="round"/>
</svg>
<div class="a" style="left:149px;top:112px;width:144px;height:30px;background:#ffffff;border:1px solid #8c8c8c;border-radius:6px;"></div>
<span class="t" style='left:152.40px;top:119px;font-size:15px;color:#2b2b2b;transform:scaleX(1.0044);'>Aptos Narrow</span>
<svg class="a" style="left:282px;top:124px" width="10" height="8" viewBox="0 0 10 8"><path d="M0.80 1.40 L3.60 5.00 L6.40 1.40" fill="none" stroke="#333" stroke-width="1.4" stroke-linecap="round" stroke-linejoin="round"/></svg>
<div class="a" style="left:295px;top:112px;width:62px;height:30px;background:#ffffff;border:1px solid #8c8c8c;border-radius:6px;"></div>
<span class="t" style='left:298.47px;top:120px;font-size:15px;color:#2b2b2b;transform:scaleX(0.9286);'>11</span>
<svg class="a" style="left:345px;top:124px" width="10" height="8" viewBox="0 0 10 8"><path d="M1.40 1.40 L4.20 5.00 L7.00 1.40" fill="none" stroke="#333" stroke-width="1.4" stroke-linecap="round" stroke-linejoin="round"/></svg>
<span class="t" style='left:365.40px;top:115px;font-size:21.6px;color:#444444;transform:scaleX(0.9429);'>A</span>
<svg class="a" style="left:378px;top:117px" width="8" height="6" viewBox="0 0 8 6"><path d="M1.2 4.6 L3.7 1.9 L6.2 4.6" fill="none" stroke="#1e7fd6" stroke-width="1.5" stroke-linecap="round" stroke-linejoin="round"/></svg>
<span class="t" style='left:399.40px;top:119px;font-size:17.2px;color:#444444;transform:scaleX(0.9083);'>A</span>
<svg class="a" style="left:410px;top:117px" width="8" height="6" viewBox="0 0 8 6"><path d="M0.9 1.9 L3.4 4.6 L5.9 1.9" fill="none" stroke="#1e7fd6" stroke-width="1.5" stroke-linecap="round" stroke-linejoin="round"/></svg>
<span class="t" style='left:159.34px;top:158px;font-size:16.2px;color:#444;font-weight:700;transform:scaleX(0.8600);'>B</span>
<div class="a" style="left:181px;top:152px;width:30px;height:30px;background:#ebebeb;border:1px solid #7a7a7a;border-radius:6px;"></div>
<span class="t" style='left:193.00px;top:158px;font-size:17.2px;color:#333;font-style:italic;font-family:"Liberation Serif",serif;'>I</span>
<span class="t" style='left:221.86px;top:158px;font-size:16.2px;color:#444;transform:scaleX(0.9400);'>U</span>
<svg class="a" style="left:221px;top:172px" width="13" height="4" viewBox="0 0 13 4"><path d="M0.9 1.9 H11.9" stroke="#444" stroke-width="1.15"/></svg>
<svg class="a" style="left:247px;top:164px" width="10" height="8" viewBox="0 0 10 8"><path d="M1.40 1.40 L4.30 5.00 L7.20 1.40" fill="none" stroke="#333" stroke-width="1.35" stroke-linecap="round" stroke-linejoin="round"/></svg>
<div class="a" style="left:264px;top:152px;width:1px;height:30px;background:#d2d2d2;"></div>
<svg class="a" style="left:271px;top:156px" width="21" height="21" viewBox="271 156 21 21">
<path d="M272 157.5 H291 M272 166.5 H291 M272.5 157 V173 M281.5 157 V173 M290.5 157 V173" fill="none" stroke="#444" stroke-width="1" stroke-dasharray="1 1" shape-rendering="crispEdges"/>
<path d="M272 175 H291" stroke="#444" stroke-width="2" shape-rendering="crispEdges"/>
</svg>
<svg class="a" style="left:301px;top:164px" width="10" height="8" viewBox="0 0 10 8"><path d="M1.40 1.40 L4.30 5.00 L7.20 1.40" fill="none" stroke="#333" stroke-width="1.35" stroke-linecap="round" stroke-linejoin="round"/></svg>
<div class="a" style="left:318px;top:152px;width:1px;height:30px;background:#d2d2d2;"></div>
<svg class="a" style="left:325px;top:155px" width="23" height="23" viewBox="325 155 23 23">
<path d="M336.4 158.2 L341.8 164.2 L334.9 170.8 L329.4 165.5 Z" fill="#fff" stroke="#444" stroke-width="1.3" stroke-linejoin="round"/>
<path d="M335.2 159.6 C335.4 156.6 338 156.6 338.2 159 L338.4 163.6" fill="none" stroke="#666" stroke-width="1.15"/>
<path d="M340.2 161.6 C342.8 161.6 343.6 164.4 343.2 169.4 C342.6 167 342 165.4 340.6 164.2 Z" fill="#1e7fd6" stroke="#1e7fd6" stroke-width="0.6" stroke-linejoin="round"/>
<rect x="326" y="172" width="20.2" height="4.8" fill="#b5e6a2"/>
</svg>
<svg class="a" style="left:355px;top:164px" width="10" height="8" viewBox="0 0 10 8"><path d="M1.40 1.40 L4.30 5.00 L7.20 1.40" fill="none" stroke="#333" stroke-width="1.35" stroke-linecap="round" stroke-linejoin="round"/></svg>
<span class="t" style='left:381.50px;top:156px;font-size:17.8px;color:#444444;transform:scaleX(0.9750);'>A</span>
<svg class="a" style="left:376px;top:171px" width="23" height="7" viewBox="0 0 23 7"><rect x="0.9" y="1" width="20.3" height="4.8" fill="#e81416"/></svg>
<svg class="a" style="left:406px;top:164px" width="10" height="8" viewBox="0 0 10 8"><path d="M1.40 1.40 L4.30 5.00 L7.20 1.40" fill="none" stroke="#333" stroke-width="1.35" stroke-linecap="round" stroke-linejoin="round"/></svg>
<svg class="a" style="left:447px;top:115px" width="19" height="15" viewBox="0 0 19 15"><path d="M0.0 2.3 H18.0 M2.8 7.5 H15.2 M0.0 12.7 H18.0" stroke="#555555" stroke-width="1.35" fill="none"/></svg>
<svg class="a" style="left:479px;top:118px" width="19" height="16" viewBox="0 0 19 16"><path d="M0.0 2.9 H18.0 M2.8 8.1 H15.2 M0.0 13.3 H18.0" stroke="#555555" stroke-width="1.35" fill="none"/></svg>
<div class="a" style="left:505px;top:112px;width:30px;height:30px;background:#ebebeb;border:1px solid #7a7a7a;border-radius:6px;"></div>
<svg class="a" style="left:511px;top:124px" width="19" height="15" viewBox="0 0 19 15"><path d="M0.0 2.0 H18.0 M2.8 7.2 H15.2 M0.0 12.3 H18.0" stroke="#555555" stroke-width="1.35" fill="none"/></svg>
<div class="a" style="left:537px;top:112px;width:1px;height:30px;background:#d2d2d2;"></div>
<svg class="a" style="left:543px;top:113px" width="25" height="25" viewBox="543 113 25 25">
<text transform="translate(550.2,131.2) rotate(-50)" font-family="Liberation Sans, sans-serif" font-size="12.2" fill="#444">ab</text>
<path d="M551.6 134.8 L565 122 M559.4 121.9 H565.2 V127.7" fill="none" stroke="#1e7fd6" stroke-width="1.4" stroke-linecap="round" stroke-linejoin="round"/>
</svg>
<svg class="a" style="left:572px;top:124px" width="10" height="8" viewBox="0 0 10 8"><path d="M1.40 1.20 L4.30 4.80 L7.20 1.20" fill="none" stroke="#333" stroke-width="1.35" stroke-linecap="round" stroke-linejoin="round"/></svg>
<svg class="a" style="left:447px;top:156px" width="19" height="21" viewBox="0 0 19 21"><path d="M0.0 2.4 H18.0 M0.0 7.6 H12.6 M0.0 12.8 H18.0 M0.0 18.0 H12.6" stroke="#555555" stroke-width="1.35" fill="none"/></svg>
<svg class="a" style="left:479px;top:156px" width="19" height="21" viewBox="0 0 19 21"><path d="M0.0 2.4 H18.0 M2.8 7.6 H15.2 M0.0 12.8 H18.0 M2.8 18.0 H15.2" stroke="#555555" stroke-width="1.35" fill="none"/></svg>
<svg class="a" style="left:511px;top:156px" width="19" height="21" viewBox="0 0 19 21"><path d="M0.0 2.4 H18.0 M5.4 7.6 H18.0 M0.0 12.8 H18.0 M5.4 18.0 H18.0" stroke="#555555" stroke-width="1.35" fill="none"/></svg>
<div class="a" style="left:537px;top:152px;width:1px;height:30px;background:#d2d2d2;"></div>
<svg class="a" style="left:546px;top:156px" width="19" height="21" viewBox="0 0 19 21"><path d="M0.0 2.4 H18.0 M10.4 7.6 H18.0 M10.4 12.8 H18.0 M0.0 18.0 H18.0" stroke="#555555" stroke-width="1.35" fill="none"/></svg>
<svg class="a" style="left:545px;top:161px" width="10" height="11" viewBox="0 0 10 11"><path d="M1.4 5.4 H8.6 M4.6 2 L1.2 5.4 L4.6 8.8" fill="none" stroke="#1e7fd6" stroke-width="1.5" stroke-linecap="round" stroke-linejoin="round"/></svg>
<svg class="a" style="left:578px;top:156px" width="19" height="21" viewBox="0 0 19 21"><path d="M0.0 2.4 H18.0 M10.4 7.6 H18.0 M10.4 12.8 H18.0 M0.0 18.0 H18.0" stroke="#555555" stroke-width="1.35" fill="none"/></svg>
<svg class="a" style="left:577px;top:161px" width="10" height="11" viewBox="0 0 10 11"><path d="M1 5.4 H8.2 M5 2 L8.4 5.4 L5 8.8" fill="none" stroke="#1e7fd6" stroke-width="1.5" stroke-linecap="round" stroke-linejoin="round"/></svg>
<svg class="a" style="left:623px;top:117px" width="22" height="22" viewBox="0 0 22 22">
<text x="1.6" y="10.2" font-family="Liberation Sans, sans-serif" font-size="12.4" fill="#444">ab</text>
<text x="1.4" y="19.4" font-family="Liberation Sans, sans-serif" font-size="12.4" fill="#444">c</text>
<path d="M16.2 9.4 C20.6 10.4 19.8 16.6 15.4 16.4 H9.4 M12.6 13 L9 16.4 L12.6 19.8" fill="none" stroke="#1e7fd6" stroke-width="1.5" stroke-linecap="round" stroke-linejoin="round"/>
</svg>
<span class="t" style='left:647.40px;top:120px;font-size:15px;color:#2b2b2b;transform:scaleX(0.9955);'>Wrap Text</span>
<svg class="a" style="left:621px;top:156px" width="22" height="21" viewBox="621 156 22 21">
<rect x="622.6" y="157.8" width="17.8" height="17.4" fill="#fff" stroke="#555" stroke-width="1.25"/>
<path d="M631.5 157.8 V161.4 M631.5 171.4 V175.2" stroke="#555" stroke-width="1.2"/>
<rect x="622.6" y="161.4" width="17.8" height="10" fill="#fff" stroke="#1e7fd6" stroke-width="1.35"/>
<path d="M625.6 166.4 H637.4 M628 164 L625.4 166.4 L628 168.8 M635 164 L637.6 166.4 L635 168.8" fill="none" stroke="#1e7fd6" stroke-width="1.25" stroke-linecap="round" stroke-linejoin="round"/>
</svg>
<span class="t" style='left:646.40px;top:160px;font-size:15px;color:#2b2b2b;'>Merge &amp; Center</span>
<svg class="a" style="left:768px;top:164px" width="10" height="8" viewBox="0 0 10 8"><path d="M1.40 1.40 L4.40 5.00 L7.40 1.40" fill="none" stroke="#333" stroke-width="1.35" stroke-linecap="round" stroke-linejoin="round"/></svg>
<div class="a" style="left:804px;top:112px;width:180px;height:30px;background:#ffffff;border:1px solid #8c8c8c;border-radius:6px;"></div>
<span class="t" style='left:806.44px;top:120px;font-size:15px;color:#2b2b2b;transform:scaleX(0.9577);'>General</span>
<svg class="a" style="left:973px;top:125px" width="10" height="8" viewBox="0 0 10 8"><path d="M0.80 0.80 L3.60 4.40 L6.40 0.80" fill="none" stroke="#333" stroke-width="1.4" stroke-linecap="round" stroke-linejoin="round"/></svg>
<svg class="a" style="left:809px;top:160px" width="23" height="18" viewBox="0 0 23 18">
<rect x="1" y="1.4" width="18.4" height="10.6" fill="#fff" stroke="#444" stroke-width="1.3"/>
<path d="M6.6 4.2 C3.6 4 3.6 9.4 6.6 9.2 M10.8 4.2 C7.8 4 7.8 9.4 10.8 9.2 M14.6 4.4 C12 4.4 12.2 8 13.4 9" fill="none" stroke="#444" stroke-width="1.35"/>
<rect x="10.6" y="6.4" width="11.4" height="11" fill="#fff"/>
<path d="M12 8.6 V15 C12 17.6 20.8 17.6 20.8 15 V8.6" fill="#fff" stroke="#e1741f" stroke-width="1.4"/>
<ellipse cx="16.4" cy="8.6" rx="4.4" ry="1.9" fill="#fff" stroke="#e1741f" stroke-width="1.4"/>
<path d="M12 11.8 C12 14.4 20.8 14.4 20.8 11.8" fill="none" stroke="#e1741f" stroke-width="1.4"/>
</svg>
<svg class="a" style="left:839px;top:165px" width="9" height="7" viewBox="0 0 9 7"><path d="M0.80 0.60 L3.50 4.00 L6.20 0.60" fill="none" stroke="#333" stroke-width="1.35" stroke-linecap="round" stroke-linejoin="round"/></svg>
<span class="t" style='left:859.82px;top:156px;font-size:23px;color:#5a5a5a;transform:scaleX(0.9842);'>%</span>
<svg class="a" style="left:896px;top:158px" width="12" height="19" viewBox="0 0 12 19"><path d="M5.6 1.6 C8.8 1.4 10.8 3.6 10.6 7 C10.4 11.4 7.4 15.2 3 16.8 L2.4 15.6 C5 14.2 6.4 12.4 6.8 10.2 C3.6 11 1.4 9 1.4 6.2 C1.4 3.6 3.2 1.8 5.6 1.6 Z" fill="#444"/></svg>
<div class="a" style="left:919px;top:152px;width:1px;height:30px;background:#d2d2d2;"></div>
<svg class="a" style="left:926px;top:155px" width="22" height="23" viewBox="0 0 22 23">
<text x="12.2" y="10.4" font-family="Liberation Sans, sans-serif" font-size="11.6" fill="#444" textLength="8.6" lengthAdjust="spacingAndGlyphs">.0</text>
<text x="3.4" y="20.6" font-family="Liberation Sans, sans-serif" font-size="11.6" fill="#444" textLength="17" lengthAdjust="spacingAndGlyphs">.00</text>
<path d="M2 7.4 H11 M5.2 4 L1.8 7.4 L5.2 10.8" fill="none" stroke="#1e7fd6" stroke-width="1.5" stroke-linecap="round" stroke-linejoin="round"/>
</svg>
<svg class="a" style="left:958px;top:155px" width="22" height="23" viewBox="0 0 22 23">
<text x="3.6" y="10.4" font-family="Liberation Sans, sans-serif" font-size="11.6" fill="#444" textLength="17" lengthAdjust="spacingAndGlyphs">.00</text>
<text x="11.2" y="20.6" font-family="Liberation Sans, sans-serif" font-size="11.6" fill="#444" textLength="9" lengthAdjust="spacingAndGlyphs">.0</text>
<path d="M1.6 16.6 H10.6 M7.4 13.2 L10.8 16.6 L7.4 20" fill="none" stroke="#1e7fd6" stroke-width="1.5" stroke-linecap="round" stroke-linejoin="round"/>
</svg>
<svg class="a" style="left:1032px;top:112px" width="36" height="28" viewBox="0 0 36 28">
<rect x="0.8" y="0.8" width="34.2" height="26.6" fill="#fafafa" stroke="#666" stroke-width="1.4"/>
<path d="M7 0.8 V27.4 M18.6 0.8 V27.4 M28.6 0.8 V27.4 M0.8 9.8 H35 M0.8 18.4 H35" stroke="#666" stroke-width="1.2"/>
<rect x="7" y="0.8" width="15.6" height="9" fill="#ff949e" stroke="#e8261c" stroke-width="1.2"/>
<rect x="7" y="10.4" width="10.6" height="7.6" fill="#7db9ea" stroke="#1b6ec2" stroke-width="1.2"/>
<rect x="7" y="18.6" width="18" height="8.8" fill="#ff949e" stroke="#e8261c" stroke-width="1.2"/>
</svg>
<span class="t" style='left:1010.06px;top:151px;font-size:15px;color:#2b2b2b;transform:scaleX(1.0438);'>Conditional</span>
<span class="t" style='left:1005.37px;top:171px;font-size:15px;color:#2b2b2b;transform:scaleX(1.0329);'>Formatting</span>
<svg class="a" style="left:1083px;top:175px" width="10" height="8" viewBox="0 0 10 8"><path d="M1.40 1.00 L4.30 4.80 L7.20 1.00" fill="none" stroke="#333" stroke-width="1.35" stroke-linecap="round" stroke-linejoin="round"/></svg>
</body></html>
